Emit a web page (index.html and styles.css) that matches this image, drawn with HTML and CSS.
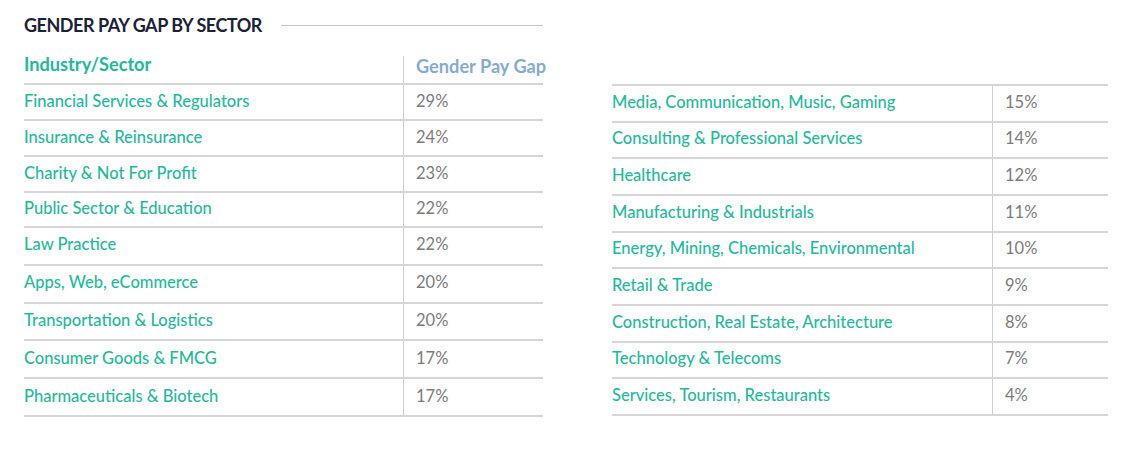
FILE: index.html
```html
<!DOCTYPE html>
<html lang="en">
<head>
<meta charset="utf-8">
<title>Gender Pay Gap by Sector</title>
<link rel="stylesheet" href="styles.css">
</head>
<body>
<div class="page">
  <div class="title-row">
    <h1 class="title">GENDER PAY GAP BY SECTOR</h1>
    <span class="title-rule"></span>
  </div>
  <div class="tables">
    <div class="table table-left">
      <div class="row head">
        <div class="cell label">Industry/Sector</div>
        <div class="cell value">Gender Pay Gap</div>
      </div>
      <div class="row short"><div class="cell label">Financial Services &amp; Regulators</div><div class="cell value">29%</div></div>
      <div class="row short"><div class="cell label">Insurance &amp; Reinsurance</div><div class="cell value">24%</div></div>
      <div class="row short"><div class="cell label">Charity &amp; Not For Profit</div><div class="cell value">23%</div></div>
      <div class="row shorter"><div class="cell label">Public Sector &amp; Education</div><div class="cell value">22%</div></div>
      <div class="row tall"><div class="cell label">Law Practice</div><div class="cell value">22%</div></div>
      <div class="row tall"><div class="cell label">Apps, Web, eCommerce</div><div class="cell value">20%</div></div>
      <div class="row tall"><div class="cell label">Transportation &amp; Logistics</div><div class="cell value">20%</div></div>
      <div class="row tall"><div class="cell label">Consumer Goods &amp; FMCG</div><div class="cell value">17%</div></div>
      <div class="row tall"><div class="cell label">Pharmaceuticals &amp; Biotech</div><div class="cell value">17%</div></div>
    </div>
    <div class="table table-right">
      <div class="row even"><div class="cell label">Media, Communication, Music, Gaming</div><div class="cell value">15%</div></div>
      <div class="row even"><div class="cell label">Consulting &amp; Professional Services</div><div class="cell value">14%</div></div>
      <div class="row even"><div class="cell label">Healthcare</div><div class="cell value">12%</div></div>
      <div class="row even"><div class="cell label">Manufacturing &amp; Industrials</div><div class="cell value">11%</div></div>
      <div class="row even"><div class="cell label">Energy, Mining, Chemicals, Environmental</div><div class="cell value">10%</div></div>
      <div class="row even"><div class="cell label">Retail &amp; Trade</div><div class="cell value">9%</div></div>
      <div class="row even"><div class="cell label">Construction, Real Estate, Architecture</div><div class="cell value">8%</div></div>
      <div class="row even"><div class="cell label">Technology &amp; Telecoms</div><div class="cell value">7%</div></div>
      <div class="row even"><div class="cell label">Services, Tourism, Restaurants</div><div class="cell value">4%</div></div>
    </div>
  </div>
</div>
</body>
</html>
```

FILE: styles.css
```css
html, body {
  margin: 0;
  padding: 0;
  background: #ffffff;
}

.page {
  width: 1136px;
  height: 453px;
  box-sizing: border-box;
  padding: 14px 0 0 24px;
  font-family: Lato, "Liberation Sans", sans-serif;
}

.title-row {
  display: flex;
  align-items: center;
  width: 519px;
  gap: 19px;
}

.title {
  margin: 0;
  font-size: 18px;
  line-height: 22px;
  font-weight: 700;
  color: #1b2236;
  letter-spacing: -0.48px;
  white-space: nowrap;
}

.title-rule {
  flex: 1;
  height: 1px;
  background: #c4c4c4;
  margin-top: 1px;
}

.tables {
  display: flex;
  gap: 69px;
  margin-top: 20px;
}

.table {
  display: flex;
  flex-direction: column;
}

.table-left {
  width: 519px;
}

.table-right {
  width: 496px;
  margin-top: 28px;
  border-top: 2px solid #d6d6d6;
}

.row {
  display: grid;
  grid-template-columns: 379px 1fr;
  box-sizing: border-box;
  border-bottom: 2px solid #d6d6d6;
}

.table-right .row {
  grid-template-columns: 380px 1fr;
}

.row.head {
  height: 29px;
}

.row.short { height: 36px; }
.row.shorter { height: 35px; }
.row.tall { height: 37.8px; }
.row.even { height: 36.67px; }

.cell {
  display: flex;
  align-items: center;
  font-size: 16.5px;
  font-weight: 500;
  white-space: nowrap;
  padding-bottom: 3px;
}

.label {
  color: #1fba9b;
}

.value {
  border-left: 1.5px solid #cfcfcf;
  padding-left: 12px;
  color: #7c7c7c;
  font-weight: 400;
}

.head .cell {
  align-items: flex-start;
  font-size: 18.2px;
  font-weight: 700;
  line-height: 20px;
  padding-top: 0;
  padding-bottom: 0;
  margin-top: -2px;
}

.head .value {
  margin-top: 0;
  color: #86abd2;
}
```
